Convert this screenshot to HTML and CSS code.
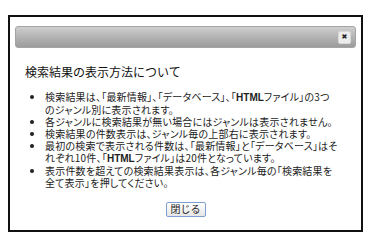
FILE: index.html
```html
<!DOCTYPE html>
<html lang="ja">
<head>
<meta charset="utf-8">
<link rel="stylesheet" href="styles.css">
</head>
<body>
<div class="page">
  <div class="dialog">
    <div class="titlebar">
      <span class="close">&#x2716;</span>
    </div>
    <h2 class="heading">検索結果の表示方法について</h2>
    <ul class="notes">
      <li>検索結果は、「最新情報」、「データベース」、「<b>HTML</b>ファイル」の3つ<br>のジャンル別に表示されます。</li>
      <li>各ジャンルに検索結果が無い場合にはジャンルは表示されません。</li>
      <li>検索結果の件数表示は、ジャンル毎の上部右に表示されます。</li>
      <li>最初の検索で表示される件数は、「最新情報」と「データベース」はそ<br>れぞれ10件、「<b>HTML</b>ファイル」は20件となっています。</li>
      <li>表示件数を超えての検索結果表示は、各ジャンル毎の「検索結果を<br>全て表示」を押してください。</li>
    </ul>
    <div class="actions">
      <button class="btn" type="button">閉じる</button>
    </div>
  </div>
</div>
</body>
</html>
```
FILE: styles.css
```css
html, body {
  margin: 0;
  padding: 0;
  background: #fff;
}
.page {
  padding: 15px 7px 0 8px;
}
.dialog {
  box-sizing: border-box;
  width: 355px;
  height: 217px;
  border: 2px solid #111;
  padding: 9px 5px 0 5px;
  font-family: "Noto Sans CJK JP", "Liberation Sans", sans-serif;
  color: #222;
}
.titlebar {
  box-sizing: border-box;
  height: 22px;
  border: 1px solid #a4a4a4;
  border-radius: 3px;
  background: linear-gradient(to bottom, #cfcfcf 0%, #b6b6b6 45%, #9c9c9c 100%);
  display: flex;
  justify-content: flex-end;
  align-items: center;
  padding-right: 4px;
}
.close {
  width: 11px;
  height: 11px;
  border-radius: 2px;
  background: #ececec;
  border: 1px solid #d8d8d8;
  color: #222;
  font-size: 7px;
  line-height: 11px;
  text-align: center;
  font-family: "DejaVu Sans", sans-serif;
}
.heading {
  margin: 16px 0 0 10px;
  font-size: 12px;
  line-height: 16px;
  font-weight: normal;
  color: #111;
}
.notes {
  margin: 11px 0 0 0;
  padding: 0 4px 0 30px;
  font-size: 10px;
  line-height: 12px;
  letter-spacing: 0.2px;
  font-feature-settings: "palt";
  color: #222;
}
.notes b {
  font-family: "Liberation Sans", sans-serif;
  font-weight: bold;
  letter-spacing: 0;
}
.actions {
  margin-top: 5px;
  text-align: center;
}
.btn {
  font-family: "Noto Sans CJK JP", sans-serif;
  font-size: 10px;
  line-height: 12px;
  padding: 0 4px;
  height: 15px;
  border: 1px solid #7d9fd0;
  border-radius: 2px;
  background: linear-gradient(to bottom, #ffffff, #e6e6e6);
  color: #222;
}
```
